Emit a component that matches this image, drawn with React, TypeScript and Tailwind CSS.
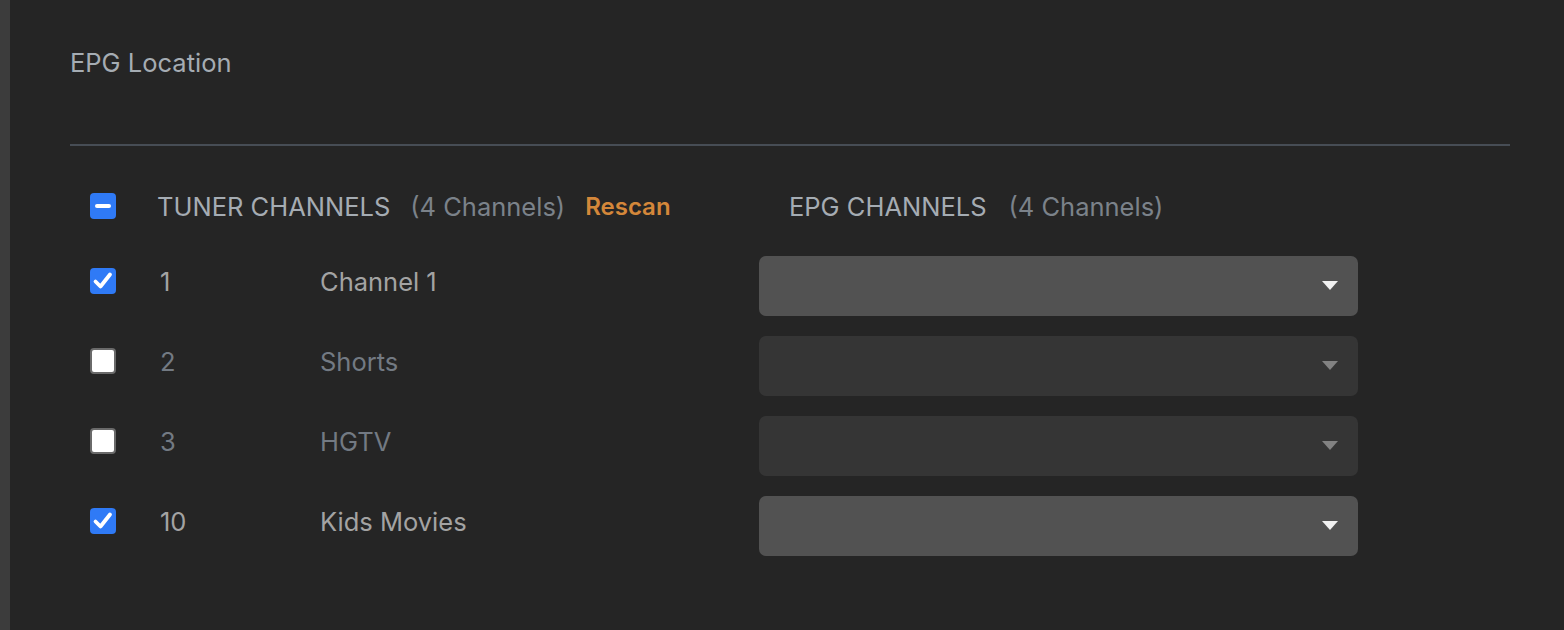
import { useState } from 'react';

type Channel = { id: number; number: string; name: string; enabled: boolean };

const initialChannels: Channel[] = [
  { id: 1, number: '1', name: 'Channel 1', enabled: true },
  { id: 2, number: '2', name: 'Shorts', enabled: false },
  { id: 3, number: '3', name: 'HGTV', enabled: false },
  { id: 4, number: '10', name: 'Kids Movies', enabled: true },
];

function Checkbox({ state, onClick }: { state: 'on' | 'off' | 'mixed'; onClick?: () => void }) {
  if (state === 'off') {
    return (
      <button
        onClick={onClick}
        className="w-[26px] h-[26px] rounded-[4px] bg-white border-2 border-[#6a6a6a] shrink-0"
      />
    );
  }
  return (
    <button
      onClick={onClick}
      className="w-[26px] h-[26px] rounded-[4px] bg-[#2f7af6] flex items-center justify-center shrink-0"
    >
      {state === 'on' ? (
        <svg width="26" height="26" viewBox="0 0 26 26">
          <polyline
            points="5.5,13.5 10.5,18.5 20,6.5"
            fill="none"
            stroke="white"
            strokeWidth="3.8"
            strokeLinecap="round"
            strokeLinejoin="round"
          />
        </svg>
      ) : (
        <span className="block w-[16px] h-[4px] rounded-full bg-white" />
      )}
    </button>
  );
}

export default function App() {
  const [channels, setChannels] = useState(initialChannels);
  const enabledCount = channels.filter((c) => c.enabled).length;
  const allState = enabledCount === channels.length ? 'on' : enabledCount === 0 ? 'off' : 'mixed';

  const toggle = (id: number) =>
    setChannels((prev) => prev.map((c) => (c.id === id ? { ...c, enabled: !c.enabled } : c)));

  return (
    <div
      className="flex min-h-screen bg-[#252525]"
      style={{ fontFamily: 'Inter, "Noto Sans", sans-serif' }}
    >
      <div className="w-[10px] bg-[#3c3c3c] shrink-0" />
      <div className="flex-1 pl-[60px] pr-[54px] pt-[48px]">
        <div className="text-[25.5px] leading-[30px] text-[#a5acb3]">EPG Location</div>
        <div className="mt-[66px] h-[2px] bg-[#474d55]" />

        <div className="pl-[20px] mt-[47px] flex items-center h-[26px]">
          <div className="w-[67px] shrink-0">
            <Checkbox state={allState} />
          </div>
          <div className="w-[602px] shrink-0 flex items-center gap-[20px] text-[25.5px] leading-[26px] pt-[2px]">
            <span className="text-[#a5acb3]">TUNER CHANNELS</span>
            <span className="text-[#7b828a]">(4 Channels)</span>
            <button className="text-[24px] font-semibold text-[#d4873a]">Rescan</button>
          </div>
          <div className="ml-[30px] flex items-center gap-[22px] text-[25.5px] leading-[26px] pt-[2px]">
            <span className="text-[#a5acb3]">EPG CHANNELS</span>
            <span className="text-[#7b828a]">(4 Channels)</span>
          </div>
        </div>

        <div className="pl-[20px] mt-[37px] flex flex-col gap-[20px]">
          {channels.map((c) => (
            <div key={c.id} className="flex items-start h-[60px]">
              <div className="w-[70px] shrink-0 pt-[12px]">
                <Checkbox state={c.enabled ? 'on' : 'off'} onClick={() => toggle(c.id)} />
              </div>
              <div
                className={
                  'w-[160px] shrink-0 mt-[13px] h-[26px] flex items-center text-[25.5px] ' +
                  (c.enabled ? 'text-[#a3a3a3]' : 'text-[#737a83]')
                }
              >
                {c.number}
              </div>
              <div
                className={
                  'w-[439px] shrink-0 mt-[13px] h-[26px] flex items-center text-[25.5px] ' +
                  (c.enabled ? 'text-[#a3a3a3]' : 'text-[#737a83]')
                }
              >
                {c.name}
              </div>
              <div
                className={
                  'w-[599px] h-[60px] rounded-[7px] flex items-center justify-end pr-[20px] ' +
                  (c.enabled ? 'bg-[#525252]' : 'bg-[#353535]')
                }
              >
                <svg width="16" height="10" viewBox="0 0 16 10">
                  <polygon points="0,0 16,0 8,9" fill={c.enabled ? '#f2f2f2' : '#828282'} />
                </svg>
              </div>
            </div>
          ))}
        </div>
      </div>
    </div>
  );
}
